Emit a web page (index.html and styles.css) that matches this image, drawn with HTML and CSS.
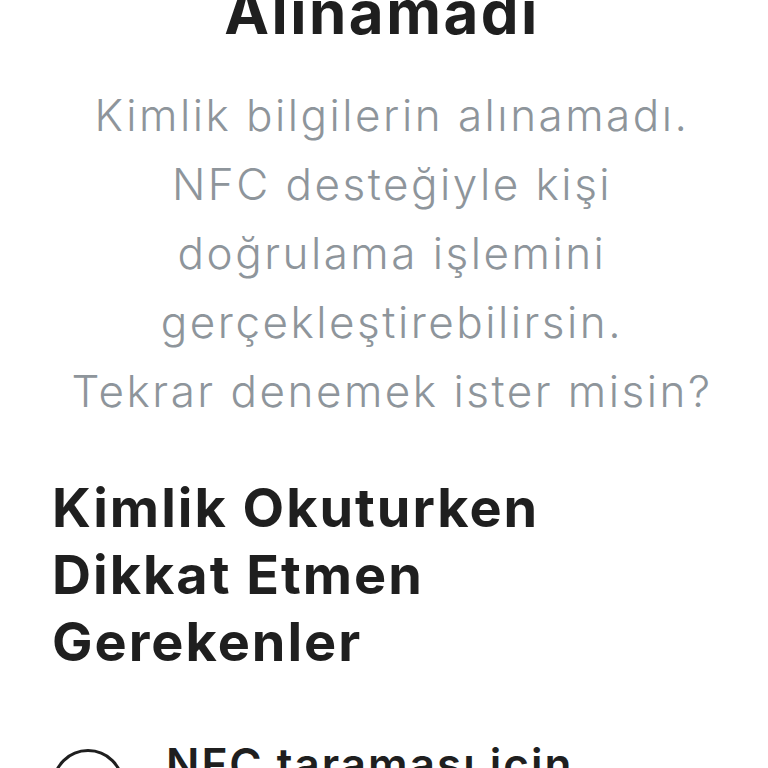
FILE: index.html
```html
<!DOCTYPE html>
<html lang="tr">
<head>
<meta charset="utf-8">
<link rel="stylesheet" href="styles.css">
</head>
<body>
<main class="page">
  <h1 class="title">Alınamadı</h1>
  <p class="desc">Kimlik bilgilerin alınamadı.<br>NFC desteğiyle kişi<br>doğrulama işlemini<br>gerçekleştirebilirsin.<br>Tekrar denemek ister misin?</p>
  <h2 class="heading">Kimlik Okuturken Dikkat Etmen Gerekenler</h2>
  <ul class="tips">
    <li class="tip">
      <span class="tip-icon"></span>
      <span class="tip-text">NFC taraması için telefonunu kimliğine yaklaştır</span>
    </li>
  </ul>
</main>
</body>
</html>
```

FILE: styles.css
```css
html, body {
  margin: 0;
  padding: 0;
  background: #ffffff;
  overflow: hidden;
}
body {
  font-family: Inter, "Noto Sans", sans-serif;
  color: #1f1f1f;
}
.page {
  padding: 0 36px 0 52px;
}
.title {
  margin: -22px 0 0 0;
  padding-right: 20px;
  font-size: 60px;
  line-height: 68px;
  font-weight: 700;
  text-align: center;
  letter-spacing: 2.5px;
}
.desc {
  margin: 35px 0 0 0;
  font-size: 44px;
  line-height: 69px;
  font-weight: 300;
  color: #8e959b;
  text-align: center;
  letter-spacing: 2.5px;
}
.heading {
  margin: 48px 0 0 0;
  font-size: 54px;
  line-height: 67px;
  font-weight: 700;
  width: 540px;
  letter-spacing: 2px;
}
.tips {
  list-style: none;
  margin: 61px 0 0 0;
  padding: 0;
}
.tip {
  display: flex;
  gap: 42px;
  align-items: flex-start;
}
.tip-icon {
  flex: none;
  box-sizing: border-box;
  width: 72px;
  height: 72px;
  margin-top: 13px;
  border: 3px solid #1f1f1f;
  border-radius: 50%;
}
.tip-text {
  font-size: 44px;
  line-height: 56px;
  font-weight: 600;
  width: 480px;
  letter-spacing: 2px;
}
```
